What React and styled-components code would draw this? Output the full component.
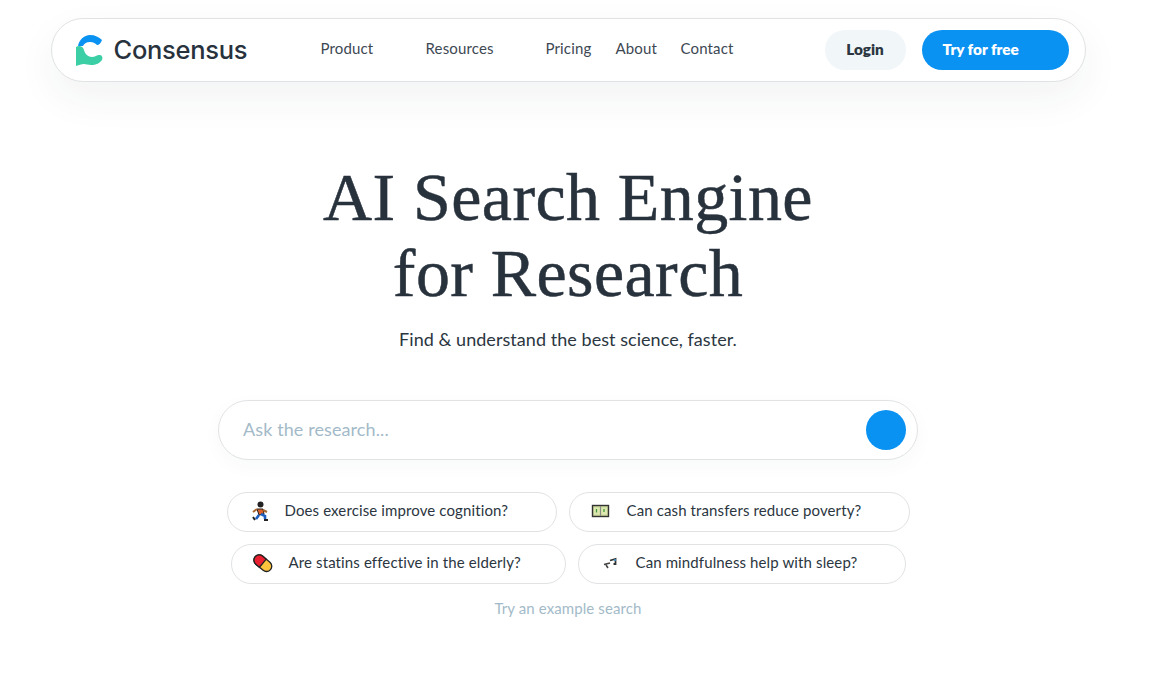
import React from "react";
import styled, { createGlobalStyle } from "styled-components";

const Global = createGlobalStyle`
  html, body { margin: 0; padding: 0; background: #fff; overflow: hidden; }
  body { font-family: "Lato", "Liberation Sans", sans-serif; color: #2b3641; }
`;
const Page = styled.div`
  width: 1136px; height: 683px; padding-top: 18px; box-sizing: border-box;
  display: flex; flex-direction: column; align-items: center;
`;
const Header = styled.header`
  width: 1035px; height: 64px; box-sizing: border-box; border: 1px solid #e0e2e4; border-radius: 32px;
  background: #fff; box-shadow: 0 16px 40px rgba(40,50,60,.06);
  display: flex; align-items: center; padding: 0 16px 0 24px;
`;
const Brand = styled.div`
  display: flex; align-items: center; gap: 11px; width: 245px;
`;
const BrandName = styled.span`
  font-family: "Inter", sans-serif; font-size: 25.5px; font-weight: 500; letter-spacing: -0.3px; color: #28323d;
  margin-top: -2px;
`;
const Nav = styled.nav`display: flex; align-items: center; flex: 1; padding-bottom: 4px;`;
const NavLink = styled.a`
  font-size: 15px; color: #3d4853; letter-spacing: .15px; width: ${p => p.$w}px; white-space: nowrap;
`;
const Pill = styled.button`
  height: 40px; border: 0; border-radius: 20px; font: 800 15.300px "Lato", sans-serif; padding: 0 0 2px;
  background: ${p => p.$primary ? "#0a92f3" : "#f1f6f9"};
  color: ${p => p.$primary ? "#fff" : "#2b3641"};
  width: ${p => p.$w}px; margin-left: ${p => p.$ml || 0}px;
  text-align: ${p => p.$primary ? "left" : "center"};
  padding-left: ${p => p.$primary ? 21 : 0}px;
`;
const Title = styled.h1`
  margin: 77px 0 0; font: 400 68px/76px "Liberation Serif", serif; color: #28323d; text-align: center;
  letter-spacing: .4px; -webkit-text-stroke: .5px #28323d;
`;
const Sub = styled.p`
  margin: 15px 0 0; font-size: 18px; line-height: 26px; color: #2b3641; letter-spacing: .05px;
`;
const Search = styled.div`
  margin-top: 48px; width: 700px; height: 60px; box-sizing: border-box; border: 1px solid #e0e2e4;
  border-radius: 30px; display: flex; align-items: center; justify-content: space-between;
  padding: 0 11px 2px 24px; box-shadow: 0 6px 20px rgba(40,50,60,.03);
`;
const Placeholder = styled.span`font-size: 18px; color: #a3bac8; letter-spacing: .1px;`;
const Go = styled.div`width: 40px; height: 40px; border-radius: 50%; background: #0a92f3; margin-top: 2px;`;
const Chips = styled.div`
  margin-top: 32px; display: flex; flex-direction: column; gap: 12px; align-items: center;
`;
const ChipRow = styled.div`display: flex; gap: 12px;`;
const Chip = styled.div`
  width: ${p => p.$w}px; height: 40px; box-sizing: border-box; border: 1px solid #e0e2e4; border-radius: 20px;
  display: flex; align-items: center; padding-left: 20px; gap: 13px; font-size: 15px; color: #2b3641; letter-spacing: .12px;
`;
const ChipText = styled.span`margin-top: -4px;`;
const Icon = styled.svg`width: 24px; height: 24px; flex: none; margin-top: -2px;`;
const Hint = styled.div`margin-top: 15px; font-size: 15px; color: #a3bac8; letter-spacing: .1px;`;

const Logo = () => (
  <svg width="27" height="31" viewBox="0 0 27 31">
    <path d="M2 11C3 5 8 0 14 0c5 0 9 2 12 5-1 3-3 5-5 5-2-2-4-3-7-3-4 0-6 2-7 4z" fill="#0a92f3" />
    <path d="M0 12c3-2 7-1 8 3 1 4 4 7 8 7 3 0 5-2 7-2 3 0 4 2 3 5-2 3-6 5-11 5-3 0-5-1-7-1-3 0-5 1-8 2z" fill="#3ccfa6" />
  </svg>
);
const Runner = () => (
  <Icon viewBox="0 0 24 24">
    <circle cx="12.500" cy="5.500" r="3" fill="#222" />
    <path d="M9 10h6l1 5-5 1z" fill="#e0602a" stroke="#222" strokeWidth="1" />
    <path d="M9 10 5 13M15 11l4 2" stroke="#a8672f" strokeWidth="2" />
    <path d="M11 16 8 20M13 15l4 2 0 3" stroke="#1c5fc0" strokeWidth="2.600" fill="none" />
    <path d="M5 18l2 3M16 21h4" stroke="#222" strokeWidth="2" />
  </Icon>
);
const Cash = () => (
  <Icon viewBox="0 0 24 24">
    <rect x="2.500" y="6.500" width="16" height="11" fill="#c9d79a" stroke="#333" strokeWidth="1.400" />
    <rect x="4" y="8.500" width="5.500" height="7" fill="#dfe8b0" />
    <rect x="11.500" y="8.500" width="5.500" height="7" fill="#dfe8b0" />
    <path d="M6.500 10v3.500M14 10v3" stroke="#3f9a3f" strokeWidth="1.300" />
    <path d="M10.500 7v10" stroke="#888" />
  </Icon>
);
const Capsule = () => (
  <Icon viewBox="0 0 24 24">
    <g transform="rotate(40 11 12)">
      <rect x="1" y="7" width="20" height="10.500" rx="5.200" fill="#fbc43c" stroke="#222" strokeWidth="1.300" />
      <path d="M11 7H6.200a5.200 5.200 0 0 0 0 10.500H11z" fill="#e8202f" stroke="#222" strokeWidth="1.300" />
    </g>
  </Icon>
);
const Sleep = () => (
  <Icon viewBox="0 0 24 24">
    <path d="M11 9.500 16.500 8v5h-2" fill="none" stroke="#333" strokeWidth="1.800" />
    <path d="M5 13.500 11 12M7 14l2 3" stroke="#444" strokeWidth="1.600" fill="none" />
    <path d="M15 9h2" stroke="#3aa0e0" strokeWidth="1.500" />
  </Icon>
);

export default function App() {
  return (
    <Page>
      <Global />
      <Header>
        <Brand><Logo /><BrandName>Consensus</BrandName></Brand>
        <Nav>
          <NavLink $w={105}>Product</NavLink>
          <NavLink $w={120}>Resources</NavLink>
          <NavLink $w={70}>Pricing</NavLink>
          <NavLink $w={65}>About</NavLink>
          <NavLink $w={60}>Contact</NavLink>
        </Nav>
        <Pill $w={81}>Login</Pill>
        <Pill $primary $w={147} $ml={16}>Try for free</Pill>
      </Header>
      <Title>AI Search Engine<br />for Research</Title>
      <Sub>Find &amp; understand the best science, faster.</Sub>
      <Search>
        <Placeholder>Ask the research...</Placeholder>
        <Go />
      </Search>
      <Chips>
        <ChipRow>
          <Chip $w={330}><Runner /><ChipText>Does exercise improve cognition?</ChipText></Chip>
          <Chip $w={341}><Cash /><ChipText>Can cash transfers reduce poverty?</ChipText></Chip>
        </ChipRow>
        <ChipRow>
          <Chip $w={335}><Capsule /><ChipText>Are statins effective in the elderly?</ChipText></Chip>
          <Chip $w={328}><Sleep /><ChipText>Can mindfulness help with sleep?</ChipText></Chip>
        </ChipRow>
      </Chips>
      <Hint>Try an example search</Hint>
    </Page>
  );
}
